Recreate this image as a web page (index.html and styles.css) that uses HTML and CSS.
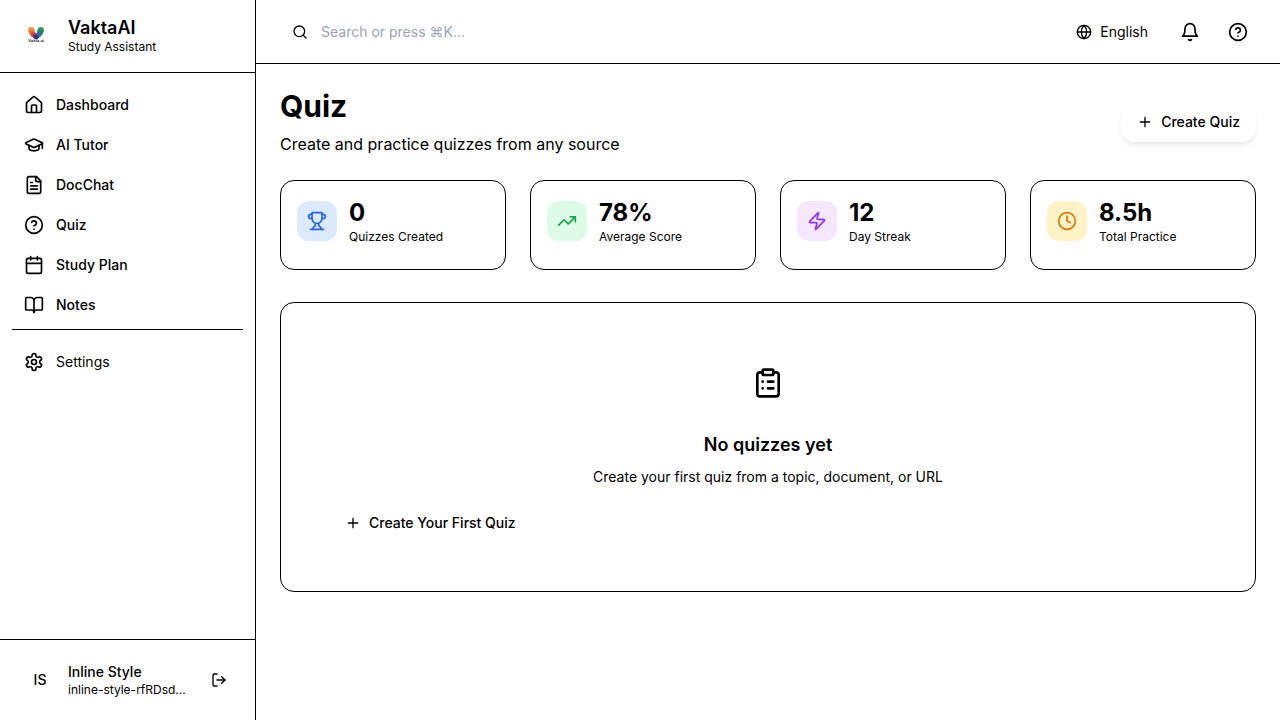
FILE: index.html
```html
<!DOCTYPE html>
<html lang="en">
<head>
<meta charset="utf-8">
<title>VaktaAI - Quiz</title>
<link rel="stylesheet" href="styles.css">
</head>
<body>
<div class="app">
  <aside class="sidebar">
    <div class="brand">
      <div class="brand-mark">
        <svg class="logo" viewBox="0 0 40 40">
          <circle cx="15.200" cy="14.200" r="3.200" fill="#f09a3c"/>
          <circle cx="24.800" cy="14.200" r="3.200" fill="#2e9a5c"/>
          <circle cx="16" cy="16.600" r="3" fill="#ee6f38"/>
          <circle cx="24" cy="16.600" r="3" fill="#26806e"/>
          <circle cx="17.600" cy="18.800" r="2.700" fill="#d8403e"/>
          <circle cx="22.500" cy="18.800" r="2.700" fill="#2a6da8"/>
          <circle cx="19.200" cy="20.600" r="2.300" fill="#7c2c66"/>
          <circle cx="20.500" cy="21.200" r="2.200" fill="#303878"/>
          <text x="12" y="26.200" textLength="16" lengthAdjust="spacingAndGlyphs" class="logo-text">Vakta ai</text>
        </svg>
      </div>
      <div>
        <div class="brand-name">VaktaAI</div>
        <div class="caption">Study Assistant</div>
      </div>
    </div>
    <nav class="nav">
      <a class="nav-item"><svg class="icon" viewBox="0 0 24 24"><path d="M15 21v-8a1 1 0 0 0-1-1h-4a1 1 0 0 0-1 1v8"/><path d="M3 10a2 2 0 0 1 .709-1.528l7-5.999a2 2 0 0 1 2.582 0l7 5.999A2 2 0 0 1 21 10v9a2 2 0 0 1-2 2H5a2 2 0 0 1-2-2z"/></svg>Dashboard</a>
      <a class="nav-item"><svg class="icon" viewBox="0 0 24 24"><path d="M21.420 10.922a1 1 0 0 0-.019-1.838L12.830 5.180a2 2 0 0 0-1.660 0L2.600 9.080a1 1 0 0 0 0 1.832l8.570 3.908a2 2 0 0 0 1.660 0z"/><path d="M22 10v6"/><path d="M6 12.500V16a6 3 0 0 0 12 0v-3.500"/></svg>AI Tutor</a>
      <a class="nav-item"><svg class="icon" viewBox="0 0 24 24"><path d="M15 2H6a2 2 0 0 0-2 2v16a2 2 0 0 0 2 2h12a2 2 0 0 0 2-2V7Z"/><path d="M14 2v4a2 2 0 0 0 2 2h4M10 9H8M16 13H8M16 17H8"/></svg>DocChat</a>
      <a class="nav-item"><svg class="icon" viewBox="0 0 24 24"><circle cx="12" cy="12" r="10"/><path d="M9.090 9a3 3 0 0 1 5.830 1c0 2-3 3-3 3M12 17h.01"/></svg>Quiz</a>
      <a class="nav-item"><svg class="icon" viewBox="0 0 24 24"><path d="M8 2v4M16 2v4"/><rect width="18" height="18" x="3" y="4" rx="2"/><path d="M3 10h18"/></svg>Study Plan</a>
      <a class="nav-item"><svg class="icon" viewBox="0 0 24 24"><path d="M12 7v14"/><path d="M3 18a1 1 0 0 1-1-1V4a1 1 0 0 1 1-1h5a4 4 0 0 1 4 4 4 4 0 0 1 4-4h5a1 1 0 0 1 1 1v13a1 1 0 0 1-1 1h-6a3 3 0 0 0-3 3 3 3 0 0 0-3-3z"/></svg>Notes</a>
      <div class="nav-secondary">
        <a class="nav-item nav-item-plain"><svg class="icon" viewBox="0 0 24 24"><path d="M12.220 2h-.44a2 2 0 0 0-2 2v.18a2 2 0 0 1-1 1.730l-.43.25a2 2 0 0 1-2 0l-.15-.08a2 2 0 0 0-2.730.73l-.22.38a2 2 0 0 0 .73 2.730l.15.1a2 2 0 0 1 1 1.720v.51a2 2 0 0 1-1 1.740l-.15.09a2 2 0 0 0-.73 2.730l.22.38a2 2 0 0 0 2.730.73l.15-.08a2 2 0 0 1 2 0l.43.25a2 2 0 0 1 1 1.730V20a2 2 0 0 0 2 2h.44a2 2 0 0 0 2-2v-.18a2 2 0 0 1 1-1.730l.43-.25a2 2 0 0 1 2 0l.15.08a2 2 0 0 0 2.730-.73l.22-.39a2 2 0 0 0-.73-2.730l-.15-.08a2 2 0 0 1-1-1.740v-.5a2 2 0 0 1 1-1.740l.15-.09a2 2 0 0 0 .73-2.730l-.22-.38a2 2 0 0 0-2.730-.73l-.15.08a2 2 0 0 1-2 0l-.43-.25a2 2 0 0 1-1-1.730V4a2 2 0 0 0-2-2z"/><circle cx="12" cy="12" r="3"/></svg>Settings</a>
      </div>
    </nav>
    <div class="account">
      <div class="avatar">IS</div>
      <div class="account-info">
        <div class="account-name">Inline Style</div>
        <div class="caption">inline-style-rfRDsd...</div>
      </div>
      <svg class="icon icon-sm" viewBox="0 0 24 24"><path d="M9 21H5a2 2 0 0 1-2-2V5a2 2 0 0 1 2-2h4"/><path d="M16 17l5-5-5-5"/><path d="M21 12H9"/></svg>
    </div>
  </aside>

  <div class="page">
    <header class="topbar">
      <div class="search">
        <svg class="icon icon-sm" viewBox="0 0 24 24"><circle cx="11" cy="11" r="8"/><path d="M21 21l-4.300-4.300"/></svg>
        <span>Search or press ⌘K...</span>
      </div>
      <div class="topbar-actions">
        <div class="language">
          <svg class="icon icon-sm" viewBox="0 0 24 24"><circle cx="12" cy="12" r="10"/><path d="M12 2a14.500 14.500 0 0 0 0 20 14.500 14.500 0 0 0 0-20"/><path d="M2 12h20"/></svg>
          English
        </div>
        <svg class="icon" viewBox="0 0 24 24"><path d="M6 8a6 6 0 0 1 12 0c0 7 3 9 3 9H3s3-2 3-9"/><path d="M10.300 21a1.940 1.940 0 0 0 3.400 0"/></svg>
        <svg class="icon" viewBox="0 0 24 24"><circle cx="12" cy="12" r="10"/><path d="M9.090 9a3 3 0 0 1 5.830 1c0 2-3 3-3 3M12 17h.01"/></svg>
      </div>
    </header>

    <main class="content">
      <div class="page-head">
        <div>
          <h1 class="page-title">Quiz</h1>
          <p class="page-subtitle">Create and practice quizzes from any source</p>
        </div>
        <button class="button button-raised"><svg class="icon icon-sm" viewBox="0 0 24 24"><path d="M5 12h14M12 5v14"/></svg>Create Quiz</button>
      </div>

      <div class="stats">
        <div class="stat">
          <div class="stat-icon blue"><svg class="icon" viewBox="0 0 24 24"><path d="M6 9H4.500a2.500 2.500 0 0 1 0-5H6"/><path d="M18 9h1.500a2.500 2.500 0 0 0 0-5H18"/><path d="M4 22h16"/><path d="M10 14.660V17c0 .55-.47.98-.97 1.210C7.850 18.750 7 20.240 7 22"/><path d="M14 14.660V17c0 .55.47.98.97 1.210C16.150 18.750 17 20.240 17 22"/><path d="M18 2H6v7a6 6 0 0 0 12 0V2Z"/></svg></div>
          <div><div class="stat-value">0</div><div class="caption">Quizzes Created</div></div>
        </div>
        <div class="stat">
          <div class="stat-icon green"><svg class="icon" viewBox="0 0 24 24"><path d="M22 7l-8.500 8.500-5-5L2 17"/><path d="M16 7h6v6"/></svg></div>
          <div><div class="stat-value">78%</div><div class="caption">Average Score</div></div>
        </div>
        <div class="stat">
          <div class="stat-icon purple"><svg class="icon" viewBox="0 0 24 24"><path d="M4 14a1 1 0 0 1-.78-1.630l9.900-10.200a.5.5 0 0 1 .86.46l-1.920 6.020A1 1 0 0 0 13 10h7a1 1 0 0 1 .78 1.630l-9.900 10.200a.5.5 0 0 1-.86-.46l1.920-6.020A1 1 0 0 0 11 14z"/></svg></div>
          <div><div class="stat-value">12</div><div class="caption">Day Streak</div></div>
        </div>
        <div class="stat">
          <div class="stat-icon amber"><svg class="icon" viewBox="0 0 24 24"><circle cx="12" cy="12" r="10"/><path d="M12 6v6l4 2"/></svg></div>
          <div><div class="stat-value">8.5h</div><div class="caption">Total Practice</div></div>
        </div>
      </div>

      <section class="empty">
        <svg class="icon icon-lg" viewBox="0 0 24 24"><rect width="8" height="4" x="8" y="2" rx="1"/><path d="M16 4h2a2 2 0 0 1 2 2v14a2 2 0 0 1-2 2H6a2 2 0 0 1-2-2V6a2 2 0 0 1 2-2h2M12 11h4M12 16h4M8 11h.01M8 16h.01"/></svg>
        <h2 class="empty-title">No quizzes yet</h2>
        <p class="empty-text">Create your first quiz from a topic, document, or URL</p>
        <button class="button empty-action"><svg class="icon icon-sm" viewBox="0 0 24 24"><path d="M5 12h14M12 5v14"/></svg>Create Your First Quiz</button>
      </section>
    </main>
  </div>
</div>
</body>
</html>
```
FILE: styles.css
```css
* { box-sizing: border-box; }
body { margin: 0; background: #fff; color: #000; font: 14px/20px Inter, sans-serif; }
h1, h2, p { margin: 0; }
.app { display: flex; height: 100vh; overflow: hidden; }

.icon { width: 20px; height: 20px; flex: none; display: block; fill: none; stroke: currentColor; stroke-width: 2; stroke-linecap: round; stroke-linejoin: round; }
.icon-sm { width: 16px; height: 16px; }
.icon-lg { width: 32px; height: 32px; }
.caption { font-size: 12px; line-height: 16px; }

.sidebar { width: 256px; flex: none; display: flex; flex-direction: column; border-right: 1px solid #000; }
.brand { height: 73px; padding: 16px; display: flex; align-items: center; gap: 12px; border-bottom: 1px solid #000; }
.brand-mark, .logo { width: 40px; height: 40px; display: block; }
.logo-text { font: 600 3.5px Inter, sans-serif; fill: #26263a; }
.brand-name { padding-top: 0.5px; font-size: 18px; line-height: 22px; font-weight: 600; }

.nav { flex: 1; padding: 12px; }
.nav-item { display: flex; align-items: center; gap: 12px; height: 40px; padding: 0 12px; font-weight: 500; }
.nav-item-plain { font-weight: 400; }
.nav-secondary { margin-top: 4px; padding-top: 12px; border-top: 1px solid #000; }

.account { height: 81px; padding: 0 28px 0 24px; display: flex; align-items: center; gap: 12px; border-top: 1px solid #000; }
.avatar { width: 32px; text-align: center; font-weight: 500; }
.account-info { flex: 1; }
.account-name { font-weight: 500; }

.page { flex: 1; min-width: 0; }
.topbar { height: 64px; padding: 0 32px 0 36px; display: flex; align-items: center; justify-content: space-between; border-bottom: 1px solid #000; }
.search { display: flex; align-items: center; gap: 13px; }
.search span { color: #9ca3af; }
.topbar-actions { display: flex; align-items: center; gap: 28px; }
.language { display: flex; align-items: center; gap: 8px; margin-right: 4px; }

.content { padding: 24px; }
.page-head { display: flex; align-items: center; justify-content: space-between; margin-bottom: 24px; }
.page-title { font-size: 30px; line-height: 36px; font-weight: 700; }
.page-subtitle { margin-top: 8px; font-size: 16px; line-height: 24px; }
.button { display: flex; align-items: center; gap: 8px; height: 40px; padding: 0 16px; border: 0; border-radius: 14px; background: #fff; color: #000; font: 500 14px/20px Inter, sans-serif; }
.button-raised { box-shadow: 0 4px 6px -1px rgba(0, 0, 0, 0.08), 0 2px 4px -2px rgba(0, 0, 0, 0.06); }

.stats { display: grid; grid-template-columns: repeat(4, 1fr); gap: 24px; margin-bottom: 32px; }
.stat { display: flex; align-items: flex-start; gap: 12px; height: 90px; padding: 16px; border: 1px solid #000; border-radius: 14px; }
.stat-icon { width: 40px; height: 40px; margin-top: 4px; display: grid; place-items: center; border-radius: 12px; }
.stat-value { font-size: 24px; line-height: 32px; font-weight: 700; }
.blue { background: #dbeafe; color: #2563eb; }
.green { background: #dcfce7; color: #16a34a; }
.purple { background: #f3e8ff; color: #9333ea; }
.amber { background: #fef3c7; color: #d97706; }

.empty { display: flex; flex-direction: column; align-items: center; height: 290px; padding: 64px 48px 48px; border: 1px solid #000; border-radius: 14px; }
.empty-title { margin-top: 32px; font-size: 18px; line-height: 28px; font-weight: 600; }
.empty-text { margin-top: 8px; }
.empty-action { align-self: flex-start; margin-top: 16px; }
```
